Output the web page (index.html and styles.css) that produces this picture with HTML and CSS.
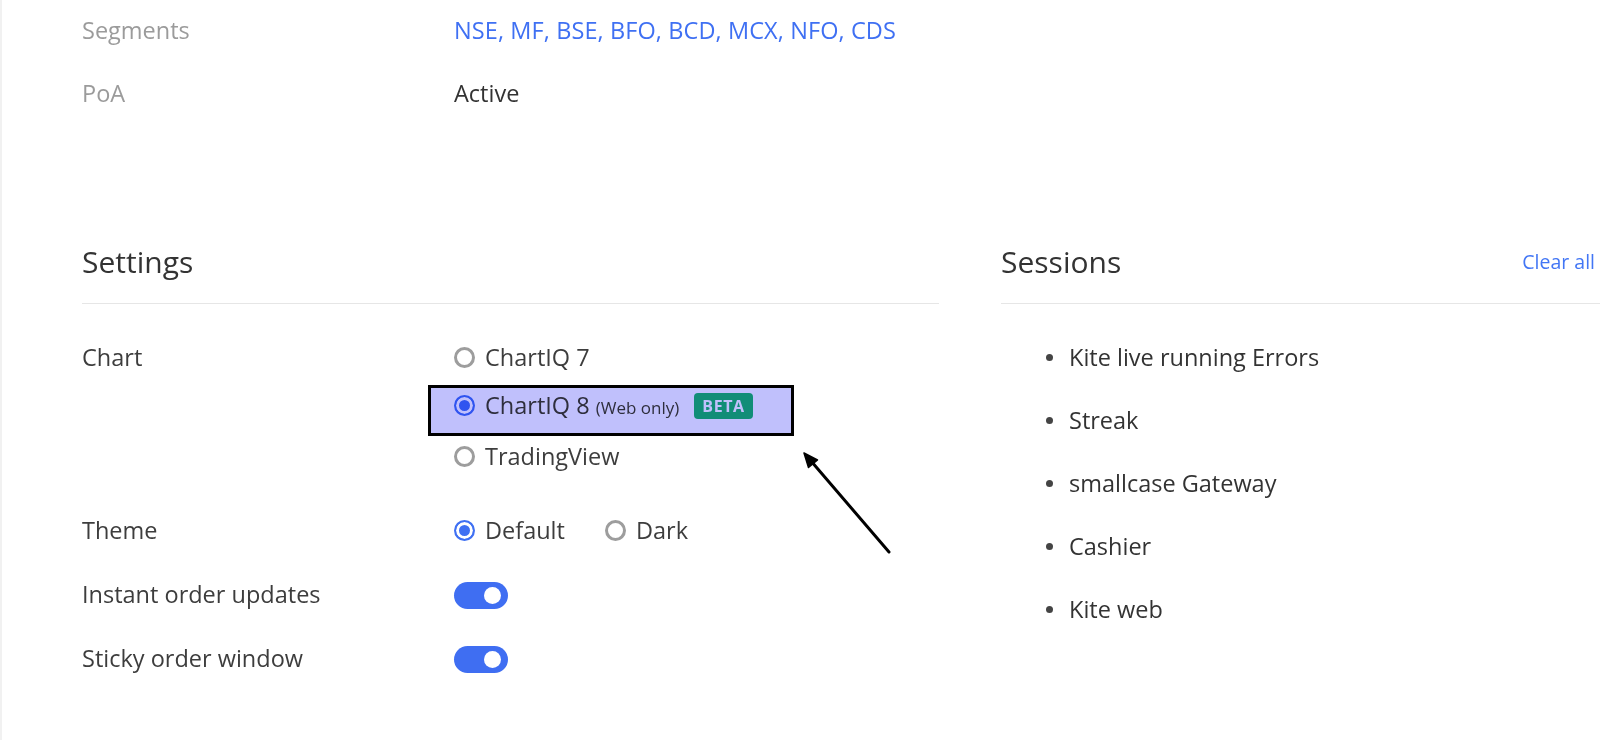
FILE: index.html
```html
<!DOCTYPE html>
<html lang="en">
<head>
<meta charset="utf-8">
<title>Profile settings</title>
<link rel="stylesheet" href="styles.css">
</head>
<body>
<div class="page">
  <section class="details">
    <div class="detail-row">
      <span class="detail-label">Segments</span>
      <span class="detail-value link">NSE, MF, BSE, BFO, BCD, MCX, NFO, CDS</span>
    </div>
    <div class="detail-row">
      <span class="detail-label">PoA</span>
      <span class="detail-value">Active</span>
    </div>
  </section>

  <div class="columns">
    <section class="settings">
      <div class="section-head">
        <h2 class="section-title">Settings</h2>
      </div>
      <div class="setting-rows">
        <div class="setting-row chart-row">
          <div class="setting-label">Chart</div>
          <div class="option-stack">
            <div class="option"><span class="radio"></span>ChartIQ 7</div>
            <div class="option option-marked"><span class="radio checked"></span>ChartIQ 8 <span class="note">(Web only)</span><span class="beta">BETA</span><span class="highlight"></span></div>
            <div class="option"><span class="radio"></span>TradingView</div>
          </div>
        </div>
        <div class="setting-row">
          <div class="setting-label">Theme</div>
          <div class="option-inline">
            <div class="option"><span class="radio checked"></span>Default</div>
            <div class="option"><span class="radio"></span>Dark</div>
          </div>
        </div>
        <div class="setting-row">
          <div class="setting-label">Instant order updates</div>
          <div class="option"><span class="toggle"><span class="knob"></span></span></div>
        </div>
        <div class="setting-row">
          <div class="setting-label">Sticky order window</div>
          <div class="option"><span class="toggle"><span class="knob"></span></span></div>
        </div>
      </div>
    </section>

    <section class="sessions">
      <div class="section-head">
        <h2 class="section-title">Sessions</h2>
        <a class="clear-all">Clear all</a>
      </div>
      <ul class="session-list">
        <li>Kite live running Errors</li>
        <li>Streak</li>
        <li>smallcase Gateway</li>
        <li>Cashier</li>
        <li>Kite web</li>
      </ul>
    </section>
  </div>

  <svg class="arrow" width="110" height="125" viewBox="790 440 110 125" aria-hidden="true">
    <line x1="887" y1="552" x2="809" y2="461" stroke="#000" stroke-width="3" stroke-linecap="round"/>
    <polygon points="802,453 815.5,460 806.5,467.5" fill="#000" stroke="#000" stroke-width="1.5" stroke-linejoin="round"/>
  </svg>
</div>
</body>
</html>
```

FILE: styles.css
```css
* { box-sizing: border-box; }

html, body {
  margin: 0;
  padding: 0;
  background: #fff;
}

body {
  font-family: "Open Sans", "Noto Sans", sans-serif;
  font-size: 23.5px;
  color: #444;
  overflow: hidden;
}

.page {
  position: relative;
  width: 1600px;
  height: 740px;
  padding-left: 80px;
  border-left: 2px solid #f1f1f1;
}

/* top details */
.details {
  padding-top: 14px;
  display: flex;
  flex-direction: column;
  gap: 31px;
}

.detail-row {
  display: grid;
  grid-template-columns: 372px 1fr;
  line-height: 32px;
}

.detail-label { color: #9b9b9b; }
.detail-value { color: #333; }
.link { color: #3f70f3; letter-spacing: 0.1px; }

/* columns */
.columns {
  display: flex;
  gap: 62px;
  margin-top: 133px;
}

.settings { width: 857px; flex: none; }
.sessions { flex: 1; }

.section-head {
  display: flex;
  align-items: center;
  justify-content: space-between;
  padding-bottom: 21px;
  border-bottom: 1px solid #e6e6e6;
}

.section-title {
  margin: 0;
  font-size: 30px;
  line-height: 40px;
  font-weight: 400;
  color: #333;
}

.clear-all {
  font-size: 19.5px;
  line-height: 26px;
  color: #4276f5;
  margin-right: 5px;
  cursor: pointer;
}

/* settings rows */
.setting-rows {
  margin-top: 29px;
  display: flex;
  flex-direction: column;
  gap: 16px;
}

.setting-row {
  display: grid;
  grid-template-columns: 372px 1fr;
  line-height: 48px;
}

.chart-row { margin-bottom: 10px; }

.setting-label { color: #3d3d3d; }

.option-stack {
  display: flex;
  flex-direction: column;
}

.option-inline {
  display: flex;
  gap: 40px;
}

.option {
  position: relative;
  white-space: nowrap;
  color: #3d3d3d;
}

.radio {
  display: inline-block;
  width: 21px;
  height: 21px;
  border-radius: 50%;
  border: 3px solid #9d9d9d;
  background: #fff;
  vertical-align: middle;
  margin: -4px 10px 0 0;
}

.radio.checked {
  border: 2px solid #3f70f3;
  background: #3f70f3;
  box-shadow: inset 0 0 0 3px #fff;
}

.note {
  font-size: 17px;
}

.beta {
  display: inline-block;
  margin-left: 15px;
  padding: 0 8px;
  height: 26px;
  line-height: 26px;
  border-radius: 4px;
  background: #16bb78;
  color: #fff;
  font-size: 16px;
  font-weight: 700;
  letter-spacing: 0.6px;
  vertical-align: middle;
  margin-top: -4px;
}

.highlight {
  position: absolute;
  left: -26px;
  top: 4px;
  width: 366px;
  height: 51px;
  border: 3px solid #000;
  background: rgb(192, 192, 252);
  mix-blend-mode: multiply;
  pointer-events: none;
}

.toggle {
  position: relative;
  display: inline-block;
  width: 54px;
  height: 27px;
  border-radius: 14px;
  background: #3f6ef2;
  vertical-align: middle;
  margin-top: -3px;
}

.knob {
  position: absolute;
  right: 7px;
  top: 5px;
  width: 17px;
  height: 17px;
  border-radius: 50%;
  background: #fff;
}

/* sessions list */
.session-list {
  list-style: none;
  margin: 29px 0 0;
  padding: 0 0 0 68px;
  display: flex;
  flex-direction: column;
  gap: 15px;
}

.session-list li {
  position: relative;
  line-height: 48px;
  color: #333;
}

.session-list li::before {
  content: "";
  position: absolute;
  left: -23px;
  top: 21px;
  width: 7px;
  height: 7px;
  border-radius: 50%;
  background: #444;
}

/* annotation arrow */
.arrow {
  position: absolute;
  left: 790px;
  top: 440px;
}
```
